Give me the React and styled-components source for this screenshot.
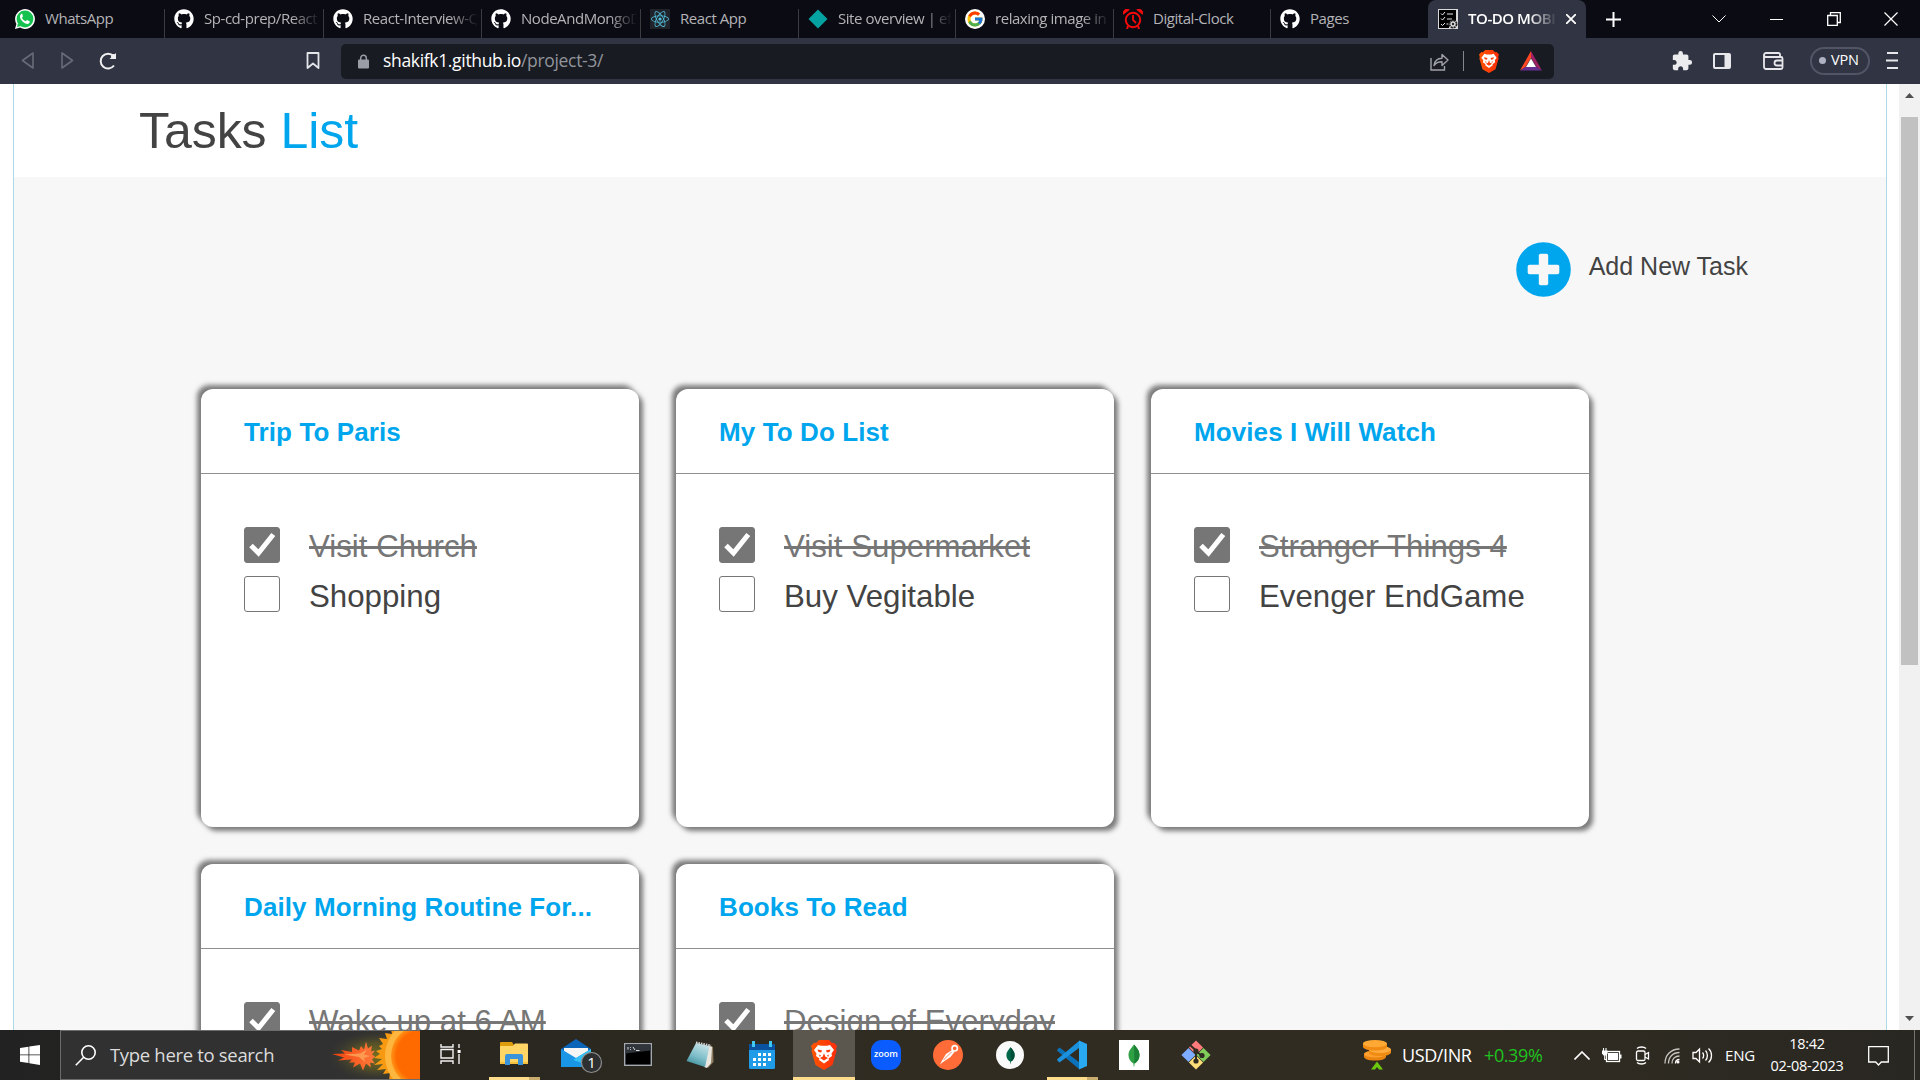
import React from "react";
import styled, { createGlobalStyle, css } from "styled-components";
import { FaGithub, FaReact } from "react-icons/fa";
import { FcGoogle } from "react-icons/fc";
import { MdExtension } from "react-icons/md";

const GlobalStyle = createGlobalStyle`
  *, *::before, *::after { box-sizing: border-box; }
  html, body { margin: 0; padding: 0; overflow: hidden; background: #fff; }
  svg { display: block; flex: none; }
`;

const ui = css`font-family: "Open Sans", "Noto Sans", sans-serif;`;

const Screen = styled.div`
  width: 1920px;
  height: 1080px;
  display: flex;
  flex-direction: column;
  overflow: hidden;
  ${ui}
`;

/* ---------- tab strip ---------- */

const TabStrip = styled.div`
  height: 38px;
  flex: none;
  display: flex;
  background: #0b0b14;
`;

const Tab = styled.div`
  width: ${(p) => p.$width}px;
  flex: none;
  display: flex;
  align-items: center;
  padding-left: ${(p) => p.$pad ?? 9}px;
  color: ${(p) => (p.$active ? "#fff" : "#b4b4b6")};
  background: ${(p) => (p.$active ? "#313442" : "transparent")};
  border-radius: ${(p) => (p.$active ? "8px 8px 0 0" : "0")};
  font-weight: ${(p) => (p.$active ? 600 : 400)};
`;

const TabDivider = styled.div`
  width: 1px;
  height: 29px;
  align-self: flex-end;
  flex: none;
  background: #3b3b40;
`;

const TabTitle = styled.span`
  font-size: 15px;
  line-height: 20px;
  letter-spacing: -0.45px;
  flex: 1;
  min-width: 0;
  margin: 0 ${(p) => p.$end ?? 3}px 2px 10px;
  overflow: hidden;
  white-space: nowrap;
  ${(p) => p.$fade && css`
    mask-image: linear-gradient(to right, #000 calc(100% - 28px), transparent);
  `}
`;

const TabClose = styled.div`
  margin-right: 10px;
`;

const NewTab = styled.div`
  width: 54px;
  display: flex;
  align-items: center;
  justify-content: center;
`;

const WindowControls = styled.div`
  margin-left: auto;
  display: flex;
`;

const WindowButton = styled.div`
  width: 57.3px;
  height: 38px;
  display: flex;
  align-items: center;
  justify-content: center;
`;

/* ---------- address bar ---------- */

const Toolbar = styled.div`
  height: 46px;
  flex: none;
  display: flex;
  align-items: center;
  background: #313442;
  padding: 0 21px;
`;

const ToolGroup = styled.div`
  display: flex;
  align-items: center;
  gap: ${(p) => p.$gap}px;
  margin-left: ${(p) => p.$left ?? 0}px;
  padding-bottom: 1px;
`;

const AddressBar = styled.div`
  width: 1213px;
  height: 35px;
  margin-left: 21px;
  padding: 0 12px 0 17px;
  display: flex;
  align-items: center;
  background: #181b22;
  border-radius: 5px;
`;

const Url = styled.span`
  margin-left: 14px;
  padding-bottom: 2px;
  font-size: 17.5px;
  line-height: 24px;
  letter-spacing: -0.33px;
  color: #fff;
  span { color: #92949b; }
`;

const AddressActions = styled.div`
  margin-left: auto;
  display: flex;
  align-items: center;
`;

const ThinBar = styled.div`
  width: 1px;
  height: 20px;
  margin: 0 15px 0 14px;
  background: #85878c;
`;

const VpnPill = styled.div`
  width: 60px;
  height: 28px;
  border: 2px solid #515566;
  border-radius: 14px;
  display: flex;
  align-items: center;
  padding-left: 7px;
  gap: 5px;
  color: #fff;
  font-size: 14.5px;
  letter-spacing: -0.2px;
  span { padding-bottom: 2px; }
  &::before {
    content: "";
    width: 7px;
    height: 7px;
    border-radius: 50%;
    background: #aeb1c2;
  }
`;

/* ---------- page ---------- */

const Viewport = styled.div`
  height: 946px;
  flex: none;
  display: flex;
  background: #fff;
  overflow: hidden;
  font-family: "Liberation Sans", Arial, sans-serif;
`;

const Page = styled.div`
  width: 1874px;
  margin-left: 13px;
  flex: none;
  border: solid #add8e6;
  border-width: 0 1px;
  display: flex;
  flex-direction: column;
`;

const PageHeader = styled.header`
  height: 93px;
  flex: none;
  padding: 18px 0 0 125px;
  background: #fff;
`;

const PageTitle = styled.h1`
  margin: 0;
  font-size: 50px;
  line-height: 58px;
  font-weight: 400;
  letter-spacing: -0.05px;
  color: #434343;
  span { color: #00a6ed; }
`;

const Board = styled.main`
  flex: 1;
  background: #f7f7f7;
`;

const AddRow = styled.div`
  display: flex;
  justify-content: flex-end;
  align-items: center;
  height: 56px;
  margin-top: 64px;
  padding-right: 138px;
  gap: 18px;
  font-size: 25px;
  color: #434343;
  span { padding-bottom: 5px; }
`;

const Cards = styled.section`
  display: grid;
  grid-template-columns: repeat(3, 438px);
  grid-auto-rows: 438px;
  gap: 37px;
  margin: 92px 0 0 187px;
`;

const Card = styled.article`
  background: #fff;
  border-radius: 12px;
  box-shadow: 4px 4px 5px #7a7a7a, -4px -4px 5px #7a7a7a;
`;

const CardTitle = styled.h2`
  margin: 0;
  height: 85px;
  padding: 28px 0 0 43px;
  font-size: 26px;
  line-height: 30px;
  font-weight: 700;
  letter-spacing: 0.1px;
  color: #00a6ed;
  border-bottom: 1px solid #8f8f8f;
`;

const Items = styled.div`
  padding: 52.9px 0 0 43px;
`;

const Item = styled.div`
  height: 49.5px;
  display: flex;
  align-items: flex-start;
  gap: 29px;
`;

const Box = styled.div`
  width: 36px;
  height: 36px;
  flex: none;
  border: 1px solid #767676;
  border-radius: 3px;
  background: ${(p) => (p.$checked ? "#767676" : "#fff")};
`;

const ItemText = styled.span`
  font-size: 31.25px;
  line-height: 36px;
  padding-top: 2.25px;
  white-space: nowrap;
  color: ${(p) => (p.$done ? "#767676" : "#434343")};
  text-decoration: ${(p) => (p.$done ? "line-through" : "none")};
`;

const Scrollbar = styled.div`
  width: 21px;
  margin-left: auto;
  background: #f1f1f1;
  display: flex;
  flex-direction: column;
  align-items: center;
  justify-content: space-between;
  padding: 9px 0;
`;

const Thumb = styled.div`
  width: 17px;
  height: 548px;
  margin: 19px 0 auto;
  background: #c1c1c1;
`;

/* ---------- taskbar ---------- */

const Taskbar = styled.footer`
  height: 50px;
  flex: none;
  display: flex;
  color: #fff;
  background: linear-gradient(90deg, #222222 0, #28261f 420px, #302c22 900px, #302c22 1500px, #292722 1920px);
`;

const StartButton = styled.div`
  width: 60px;
  display: flex;
  align-items: center;
  justify-content: center;
`;

const SearchBox = styled.div`
  width: 360px;
  border: 1px solid #6b6b6b;
  border-right: 0;
  background: #313131;
  display: flex;
  align-items: center;
  padding-left: 14px;
  font-size: 18.5px;
  letter-spacing: -0.32px;
  color: #dcdcdc;
  span { margin-left: 13px; width: 180px; white-space: nowrap; padding-bottom: 2px; }
  & > svg:last-child { margin-left: auto; }
`;

const AppSlot = styled.div`
  width: ${(p) => p.$width ?? 62}px;
  flex: none;
  display: flex;
  flex-direction: column;
  align-items: center;
  padding-right: ${(p) => p.$inset ?? 0}px;
  background: ${(p) => (p.$current ? "#5b574f" : "transparent")};
`;

const AppIcon = styled.div`
  height: 47px;
  display: flex;
  align-items: center;
  justify-content: center;
  padding-top: ${(p) => p.$drop ?? 3}px;
`;

const Underline = styled.div`
  width: ${(p) => (p.$full ? 62 : 51)}px;
  height: 3px;
  background: ${(p) => (p.$full ? "#fddc8b" : "linear-gradient(90deg, #fddc8b 40px, #c9ad6e 40px)")};
`;

const ZoomTile = styled.div`
  width: 30px;
  height: 30px;
  border-radius: 11px;
  background: #0b5cff;
  color: #fff;
  font-size: 9px;
  font-weight: 600;
  line-height: 27px;
  text-align: center;
`;

const IconPlate = styled.div`
  width: ${(p) => p.$size}px;
  height: ${(p) => p.$size}px;
  flex: none;
  border-radius: ${(p) => (p.$round ? "50%" : "0")};
  background: ${(p) => p.$bg};
  display: flex;
  align-items: center;
  justify-content: center;
`;

const Tray = styled.div`
  margin-left: auto;
  display: flex;
  align-items: center;
`;

const TrayText = styled.span`
  font-size: ${(p) => p.$size}px;
  letter-spacing: ${(p) => p.$track}px;
  margin-left: ${(p) => p.$left}px;
  width: ${(p) => p.$width}px;
  color: ${(p) => p.$color ?? "#fff"};
  white-space: nowrap;
`;

const TrayItem = styled.div`
  margin-left: ${(p) => p.$left}px;
  padding-top: 1px;
`;

const Clock = styled.div`
  width: 78px;
  margin-left: 14px;
  font-size: 14.5px;
  line-height: 22.5px;
  letter-spacing: -0.25px;
  text-align: center;
  white-space: nowrap;
`;

const DesktopEdge = styled.div`
  width: 6px;
  height: 50px;
  margin-left: 25px;
  border-left: 1px solid #77746c;
`;

/* ---------- drawings ---------- */

const WhatsAppIcon = () => (
  <svg width="20" height="20" viewBox="0 0 20 20">
    <path d="M0 20l1.4-5.1A9.9 9.9 0 1 1 5.100 18.600z" fill="#fff" />
    <circle cx="10" cy="10" r="8.400" fill="#16c24f" />
    <path d="M2 18l1-4 3 3z" fill="#16c24f" />
    <path d="M7.400 5.300c-.3-.6-1-.6-1.500-.1-2.300 2.500.2 6 2.600 8 2.300 1.900 5.300 2.400 6.100.4.500-1.100.1-1.300-.6-1.600l-1.500-.8c-.5-.2-.7 0-1 .4-.5.7-.7.8-1.200.5-1.600-.8-2.600-1.800-3.300-3.100-.2-.5.9-1 .9-1.800z" fill="#fff" />
  </svg>
);

const ClockIcon = () => (
  <svg width="20" height="20" viewBox="0 0 20 20" fill="none" stroke="#f30a0a">
    <circle cx="10" cy="11" r="7.200" strokeWidth="2" />
    <path d="M10 6v5l3 3" strokeWidth="1.800" />
    <path d="M5 17l-1 3M15 17l1 3" strokeWidth="2" />
    <path d="M.3 5.800A4.200 4.200 0 0 1 6.800 .8zM19.700 5.800A4.200 4.200 0 0 0 13.200 .8z" fill="#f30a0a" stroke="none" />
  </svg>
);

const ChecklistIcon = () => (
  <svg width="20" height="20" viewBox="0 0 20 20" fill="none" stroke="#e8e8e8">
    <rect width="20" height="20" fill="#d8d8d8" stroke="none" />
    <path d="M1 1h17v11l-4 0-3 3v4H1z" fill="#000" stroke="none" />
    <path d="M3 4.500l1.500 1.500L7 3M3 9.500L4.500 11 7 8M3 15l1.500 1.500L7 14M9 5h6M9 10h5M8.500 15h2" strokeWidth="1" />
    <circle cx="15" cy="15" r="3.600" stroke="#222" strokeWidth="1.800" strokeDasharray="2.200 .6" fill="#ddd" />
    <circle cx="15" cy="15" r="1.200" fill="#222" stroke="none" />
  </svg>
);

const Lock = () => (
  <svg width="11" height="15" viewBox="0 0 11 15">
    <path d="M2.700 6V4a2.800 2.800 0 0 1 5.600 0v2" fill="none" stroke="#9a9da6" strokeWidth="1.500" />
    <rect y="5.500" width="11" height="9" rx="1" fill="#9a9da6" />
  </svg>
);

const Share = () => (
  <svg width="19" height="19" viewBox="0 0 19 19" fill="none" stroke="#a0a2a8" strokeWidth="1.400">
    <path d="M1 6v12h13.500v-4" />
    <path d="M4 13.500c.6-5 3.500-7 8-7.200V2.500L18 8l-6 5.500V9.800c-3.500 0-6 .8-8 3.700z" strokeLinejoin="round" />
  </svg>
);

const Bat = () => (
  <svg width="22" height="20" viewBox="0 0 22 20">
    <path d="M11 0L0 19.500 5.500 16 11 7z" fill="#ff4724" />
    <path d="M11 0l11 19.500L16.500 16 11 7z" fill="#9e1f63" />
    <path d="M0 19.500h22L16.500 16h-11z" fill="#662d91" />
    <path d="M11 7.500L16 16H6z" fill="#fff" />
  </svg>
);

const BraveLion = ({ w, h }) => (
  <svg width={w} height={h} viewBox="0 0 26 30">
    <defs>
      <linearGradient id="lion" x1="0" x2="1">
        <stop offset="0" stopColor="#ff5500" />
        <stop offset="1" stopColor="#ff2d0c" />
      </linearGradient>
    </defs>
    <path d="M8 0h10l3 3 2-.3L26 6l-1 3 .5 2-4 14L13 30 4.500 25l-4-14L1 9 0 6l3-3.300L5 3z" fill="url(#lion)" />
    <path d="M7 5l3 .8h6L19 5l4 5-2.500 3.500L21 16l-3.500 2.500L18 20l-5 3.500L8 20l.5-1.500L5 16l.5-2.500L3 10z" fill="#fff" />
    <path d="M6.500 9.500l4.500.8-.8 2.300-2.700-.6zM19.500 9.500l-4.500.8.8 2.300 2.700-.6zM13 13l1.200 3.500L17 18l-4 2.500L9 18l2.800-1.500zM8 14.500l2 1-1.200 1.600zM18 14.500l-2 1 1.200 1.600z" fill="#ff3c0a" />
  </svg>
);

const Tick = () => (
  <svg width="34" height="34" viewBox="0 0 34 34">
    <path d="M6 17.500l7.500 7.500L28.300 6.500" fill="none" stroke="#fff" strokeWidth="5" />
  </svg>
);

const Plus = () => (
  <svg width="55" height="55" viewBox="0 0 55 55">
    <circle cx="27.500" cy="27.500" r="27.300" fill="#00a6ed" />
    <rect x="11.700" y="22.800" width="31.600" height="9.400" rx="1.800" fill="#f7f7f7" />
    <rect x="22.800" y="11.700" width="9.400" height="31.600" rx="1.800" fill="#f7f7f7" />
  </svg>
);

const Meteor = () => (
  <svg width="94" height="48" viewBox="0 0 94 48">
    <defs>
      <radialGradient id="halo">
        <stop offset="0" stopColor="#857a1c" stopOpacity=".85" />
        <stop offset=".5" stopColor="#6b6422" stopOpacity=".6" />
        <stop offset="1" stopColor="#323232" stopOpacity="0" />
      </radialGradient>
      <radialGradient id="sun">
        <stop offset=".82" stopColor="#ff6a00" />
        <stop offset="1" stopColor="#ff9416" />
      </radialGradient>
      <linearGradient id="flame">
        <stop offset="0" stopColor="#f2410e" />
        <stop offset="1" stopColor="#ff7a3a" />
      </linearGradient>
    </defs>
    <ellipse cx="52" cy="25" rx="52" ry="27" fill="url(#halo)" />
    <path d="M6 23l13-.5-4-3.500 11 2 0-5 7 3.500 2-4.500 3 3.500 2-8 2 7 4-3-1 6 4-1-3 4 3 2-3 3 3 4-5-1 1 5-5-4-3 7-3-7-7 4 2-5-6 0 3-3-14 1 6-3z" fill="url(#flame)" />
    <path d="M18 23.500l16-1 7-4-3 5 6 1.500-6 2 1 4-6-5z" fill="#ffa65a" opacity=".8" />
    <path d="M94 0H70l-5-1 1 4-7-1 2 6-8-1 4 6-4 2 3 3-6 2 4 3-6 4 8 1-8 6 9-1-6 6 9-1-3 5 7-1-1 7h31z" fill="#f79a12" />
    <circle cx="96" cy="25" r="37" fill="#ffb63e" />
    <circle cx="96" cy="25" r="31" fill="url(#sun)" />
  </svg>
);

const TaskView = () => (
  <svg width="21" height="20" viewBox="0 0 21 20" fill="none" stroke="#f4f4f4" strokeWidth="1.400">
    <path d="M1 0v3h12V0M1 20v-3h12v3M1 5.500h12v8.500H1zM19 0v4M19 10v10" />
    <rect x="17.600" y="6" width="3" height="3" fill="#fff" stroke="none" />
  </svg>
);

const Folder = () => (
  <svg width="28" height="24" viewBox="0 0 28 24">
    <path d="M0 1a1 1 0 0 1 1-1h11l2 3v3H0z" fill="#dc9c0c" />
    <path d="M0 4h13l2-2.500h12a1 1 0 0 1 1 1V22H0z" fill="#ffd666" />
    <path d="M0 20h28v2H0z" fill="#f5c03c" />
    <path d="M5 23v-9a2 2 0 0 1 2-2h14a2 2 0 0 1 2 2v9h-5v-6h-8v6z" fill="#3a94dc" />
  </svg>
);

const Mail = () => (
  <svg width="54" height="36" viewBox="-12 0 54 36">
    <path d="M0 11L15 1l15 10v3H0z" fill="#0a64b8" />
    <path d="M3 10h24v7l-12 6L3 17z" fill="#f5f5f5" />
    <path d="M0 11l15 9 15-9v18H0z" fill="#1a96e6" />
    <path d="M30 11L12 22l18 6z" fill="#35c1f5" />
    <circle cx="30.500" cy="24.500" r="10" fill="#2e2f30" stroke="#8d8d8d" strokeWidth="1.200" />
    <text x="30.500" y="30" fill="#fff" fontSize="15" textAnchor="middle" fontFamily="Open Sans, sans-serif">1</text>
  </svg>
);

const Terminal = () => (
  <svg width="28" height="23" viewBox="0 0 28 23">
    <rect x=".7" y=".7" width="26.600" height="21.600" fill="#000" stroke="#a3a7b0" strokeWidth="1.400" />
    <path d="M1.500 1.500h25v6l-25 3z" fill="#30343b" />
    <path d="M4 4v2.500M6.500 4v.8M6.500 6v.8M9 4l2 3M12 7.500h3.500" stroke="#ddd" strokeWidth="1" />
  </svg>
);

const Notepad = () => (
  <svg width="28" height="28" viewBox="0 0 28 28">
    <defs>
      <linearGradient id="pad" x1=".7" x2=".3" y1="0" y2="1">
        <stop offset="0" stopColor="#c9e4e8" />
        <stop offset=".55" stopColor="#7fbfca" />
        <stop offset="1" stopColor="#3a8b98" />
      </linearGradient>
    </defs>
    <path d="M24 4l3 2 .5 15-5.500 6z" fill="#8d7d62" />
    <path d="M23 5l3 1-1 16-4 5-3-1z" fill="#e9e6df" />
    <path d="M10 2l13.500 3L19 26 .5 20z" fill="url(#pad)" />
    <path d="M10 1.500l15 3" stroke="#d8d8d8" strokeWidth="2" strokeDasharray="1.500 1" />
  </svg>
);

const Calendar = () => (
  <svg width="26" height="28" viewBox="0 0 26 28">
    <rect y="3" width="26" height="25" rx="1.500" fill="#1f9be8" />
    <path d="M0 4.500A1.500 1.500 0 0 1 1.500 3h23A1.500 1.500 0 0 1 26 4.500V9H0z" fill="#0a52a0" />
    <path d="M3 0h3v6H3zM20 0h3v6h-3z" fill="#40c8f2" />
    <path d="M9 12h3v3H9zM14 12h3v3h-3zM19 12h3v3h-3zM4 17h3v3H4zM9 17h3v3H9zM14 17h3v3h-3zM19 17h3v3h-3zM4 22h3v3H4zM9 22h3v3H9zM14 22h3v3h-3z" fill="#fff" />
  </svg>
);

const Postman = () => (
  <svg width="30" height="30" viewBox="0 0 30 30">
    <circle cx="15" cy="15" r="15" fill="#ff6c37" />
    <circle cx="21.700" cy="8.300" r="2.700" fill="none" stroke="#fff" strokeWidth="1.600" />
    <path d="M19 10l2.500 2-4 5-7.500 5-3 2.500 2-4 4-6.500z" fill="#fff" />
    <path d="M18.500 12l-8 8" stroke="#ff6c37" strokeWidth=".8" />
  </svg>
);

const VsCode = () => (
  <svg width="30" height="30" viewBox="0 0 30 30">
    <path d="M2.500 7.500L22 22v7L.5 11c-.6-.5-.6-1 0-1.500z" fill="#0b72b9" />
    <path d="M2.500 22.500L22 8V1L.5 19c-.6.5-.6 1 0 1.500z" fill="#1b90dc" />
    <path d="M22 .5L30 4v22l-8 3.500z" fill="#2aa9f3" />
  </svg>
);

const Leaf = ({ w, h, dark }) => (
  <svg width={w} height={h} viewBox="0 0 12 22">
    <path d="M6 0c3 3.500 5.500 6 5.500 10.500C11.500 15 9 17.500 6.500 19L6.300 22h-.6l-.3-3C2.500 17 .5 14.500.5 10.500.5 6 3.500 3.500 6 0z" fill={dark ? "#00684a" : "#2fa044"} />
    <path d="M6 0c3 3.500 5.500 6 5.500 10.500C11.500 15 9 17.500 6.500 19z" fill={dark ? "#004d38" : "#1c7f36"} />
  </svg>
);

const GitTile = () => (
  <svg width="30" height="30" viewBox="0 0 30 30">
    <g transform="rotate(45 15 15)">
      <rect x="4.700" y="4.700" width="10" height="10" fill="#ff7b7b" />
      <rect x="15.300" y="4.700" width="10" height="10" fill="#80cc5a" />
      <rect x="4.700" y="15.300" width="10" height="10" fill="#7eacff" />
      <rect x="15.300" y="15.300" width="10" height="10" fill="#ffdf78" />
    </g>
    <path d="M9.500 5.500l5.500 5v11M15 11l6 5" fill="none" stroke="#2f2b22" strokeWidth="2" />
    <circle cx="15" cy="11" r="2.600" fill="#2f2b22" />
    <circle cx="15" cy="21" r="2.600" fill="#2f2b22" />
    <circle cx="21" cy="15.500" r="2.600" fill="#2f2b22" />
  </svg>
);

const Coins = () => (
  <svg width="28" height="30" viewBox="0 0 28 30">
    <path d="M1 13.500h22v3c0 2.500-4 4-11 4s-11-1.500-11-4z" fill="#e8830f" />
    <ellipse cx="12" cy="14" rx="11" ry="3.600" fill="#ff9f2e" />
    <path d="M6 9h22v3c0 2.500-4 4-11 4S6 14.500 6 12z" fill="#f08b14" />
    <ellipse cx="17" cy="9.500" rx="11" ry="3.600" fill="#ffab3d" />
    <path d="M0 3.500h24v3c0 2.500-5 4-12 4S0 9 0 6.500z" fill="#f08b14" />
    <ellipse cx="12" cy="3.600" rx="12" ry="3.600" fill="#ffa834" />
    <path d="M8 29.500l6-8 6 8h-4L14 27l-2 2.500z" fill="#6cc90f" />
  </svg>
);

const line = { fill: "none", stroke: "#fff", strokeWidth: 1.3 };

/* ---------- data ---------- */

const tabs = [
  { icon: <WhatsAppIcon />, title: "WhatsApp", width: 165, pad: 15 },
  { icon: <FaGithub size={20} color="#fff" />, title: "Sp-cd-prep/React", fade: true, width: 159 },
  { icon: <FaGithub size={20} color="#fff" />, title: "React-Interview-Q", fade: true, width: 158 },
  { icon: <FaGithub size={20} color="#fff" />, title: "NodeAndMongoD", fade: true, width: 159 },
  { icon: <IconPlate $size={20} $bg="#20232a"><FaReact size={18} color="#53c1de" /></IconPlate>, title: "React App", width: 158 },
  {
    icon: <svg width="20" height="20" viewBox="0 0 20 20"><path d="M10 .5L19.500 10 10 19.500.5 10z" fill="#05a2a2" /></svg>,
    title: "Site overview | eff", fade: true, width: 157,
  },
  { icon: <IconPlate $size={20} $round $bg="#fff"><FcGoogle size={18} /></IconPlate>, title: "relaxing image in", fade: true, width: 158 },
  { icon: <ClockIcon />, title: "Digital-Clock", width: 157 },
  { icon: <FaGithub size={20} color="#fff" />, title: "Pages", width: 157, last: true },
];

const lists = [
  { title: "Trip To Paris", items: [["Visit Church", true], ["Shopping", false]] },
  { title: "My To Do List", items: [["Visit Supermarket", true], ["Buy Vegitable", false]] },
  { title: "Movies I Will Watch", items: [["Stranger Things 4", true], ["Evenger EndGame", false]] },
  { title: "Daily Morning Routine For...", items: [["Wake up at 6 AM", true]] },
  { title: "Books To Read", items: [["Design of Everyday", true]] },
];

const apps = [
  { icon: <Folder />, open: true, drop: 0 },
  { icon: <Mail />, drop: 5 },
  { icon: <Terminal />, drop: 2 },
  { icon: <Notepad /> },
  { icon: <Calendar /> },
  { icon: <BraveLion w={26} h={30} />, current: true },
  { icon: <ZoomTile>zoom</ZoomTile> },
  { icon: <Postman /> },
  { icon: <IconPlate $size={28} $round $bg="#fafafa"><Leaf w={9} h={19} dark /></IconPlate> },
  { icon: <VsCode />, open: true },
  { icon: <IconPlate $size={30} $bg="#fff"><Leaf w={12} h={23} /></IconPlate> },
  { icon: <GitTile /> },
];

export default function App() {
  return (
    <Screen>
      <GlobalStyle />
      <TabStrip>
        {tabs.map((t, i) => (
          <Tab key={i} $width={t.width} $pad={t.pad}>
            {t.icon}
            <TabTitle $fade={t.fade}>{t.title}</TabTitle>
            {!t.last && <TabDivider />}
          </Tab>
        ))}
        <Tab $active $width={158} $pad={10}>
          <ChecklistIcon />
          <TabTitle $fade $end={9}>TO-DO MOBI</TabTitle>
          <TabClose>
            <svg width="10" height="10" viewBox="0 0 10 10" {...line} strokeWidth="1.8"><path d="M0 0l10 10M10 0L0 10" /></svg>
          </TabClose>
        </Tab>
        <NewTab>
          <svg width="15" height="15" viewBox="0 0 15 15" {...line} strokeWidth="2"><path d="M7.500 0v15M0 7.500h15" /></svg>
        </NewTab>
        <WindowControls>
          <WindowButton>
            <svg width="14" height="8" viewBox="0 0 14 8" {...line} strokeWidth="1"><path d="M.5.5L7 7 13.500.5" /></svg>
          </WindowButton>
          <WindowButton>
            <svg width="13" height="1" viewBox="0 0 13 1"><path d="M0 0h13v1H0z" fill="#fff" /></svg>
          </WindowButton>
          <WindowButton>
            <svg width="14" height="14" viewBox="0 0 14 14" {...line}><path d="M.7 3.500h9.600v9.800H.7zM3.500 3V.7h9.800v9.800h-2.500" /></svg>
          </WindowButton>
          <WindowButton>
            <svg width="14" height="14" viewBox="0 0 14 14" {...line} strokeWidth="1.200"><path d="M.5.5l13 13M13.500.5l-13 13" /></svg>
          </WindowButton>
        </WindowControls>
      </TabStrip>

      <Toolbar>
        <ToolGroup $gap={27}>
          <svg width="13" height="17" viewBox="0 0 13 17" fill="none" stroke="#686b77" strokeWidth="1.600" strokeLinejoin="round"><path d="M12 1v15L1.500 8.500z" /></svg>
          <svg width="13" height="17" viewBox="0 0 13 17" fill="none" stroke="#686b77" strokeWidth="1.600" strokeLinejoin="round"><path d="M1 1v15l10.500-7.500z" /></svg>
        </ToolGroup>
        <ToolGroup $left={25}>
          <svg width="18" height="18" viewBox="0 0 18 18" fill="none" stroke="#f0f0f2" strokeWidth="2"><path d="M15 13.500A7.400 7.400 0 1 1 14.500 4" /><path d="M17 1v6h-6.500z" fill="#f0f0f2" stroke="none" /><circle cx="14.500" cy="4.500" r="2.500" fill="#f0f0f2" stroke="none" /></svg>
        </ToolGroup>
        <ToolGroup $left={189}>
          <svg width="14" height="17" viewBox="0 0 14 17" fill="none" stroke="#e4e5ea" strokeWidth="1.800" strokeLinejoin="round"><path d="M1.500 1h11v15L7 11.500 1.500 16z" /></svg>
        </ToolGroup>
        <AddressBar>
          <Lock />
          <Url>shakifk1.github.io<span>/project-3/</span></Url>
          <AddressActions>
            <Share />
            <ThinBar />
            <BraveLion w={20} h={23} />
            <ToolGroup $left={21}><Bat /></ToolGroup>
          </AddressActions>
        </AddressBar>
        <ToolGroup $left={117}><MdExtension size={22} color="#ececef" /></ToolGroup>
        <ToolGroup $left={20}>
          <svg width="18" height="16" viewBox="0 0 18 16"><rect x="1" y="1" width="16" height="14" rx="1" fill="none" stroke="#e8e8ec" strokeWidth="2" /><path d="M11.500 1H17v14h-5.500z" fill="#e8e8ec" /></svg>
        </ToolGroup>
        <ToolGroup $left={32}>
          <svg width="21" height="18" viewBox="0 0 21 18" fill="none" stroke="#e8e8ec" strokeWidth="1.800"><path d="M17 4V2.500A1.500 1.500 0 0 0 15.500 1H3a2 2 0 0 0 0 4h15a1.500 1.500 0 0 1 1.500 1.500v9A1.500 1.500 0 0 1 18 17H3a2 2 0 0 1-2-2V3M20 8.500h-6a2.500 2.500 0 0 0 0 5h6" /></svg>
        </ToolGroup>
        <ToolGroup $left={26} $gap={16}>
          <VpnPill><span>VPN</span></VpnPill>
          <svg width="12" height="17" viewBox="0 0 12 17"><path d="M1 0h11v2H1zM0 7.500h12v2H0zM1 15h11v2H1z" fill="#e8e8ec" /></svg>
        </ToolGroup>
      </Toolbar>

      <Viewport>
        <Page>
          <PageHeader>
            <PageTitle>Tasks <span>List</span></PageTitle>
          </PageHeader>
          <Board>
            <AddRow>
              <Plus />
              <span>Add New Task</span>
            </AddRow>
            <Cards>
              {lists.map((l) => (
                <Card key={l.title}>
                  <CardTitle>{l.title}</CardTitle>
                  <Items>
                    {l.items.map(([text, done]) => (
                      <Item key={text}>
                        <Box $checked={done}>{done && <Tick />}</Box>
                        <ItemText $done={done}>{text}</ItemText>
                      </Item>
                    ))}
                  </Items>
                </Card>
              ))}
            </Cards>
          </Board>
        </Page>
        <Scrollbar>
          <svg width="9" height="5" viewBox="0 0 9 5"><path d="M0 5h9L4.500 0z" fill="#505050" /></svg>
          <Thumb />
          <svg width="9" height="5" viewBox="0 0 9 5"><path d="M0 0h9L4.500 5z" fill="#505050" /></svg>
        </Scrollbar>
      </Viewport>

      <Taskbar>
        <StartButton>
          <svg width="20" height="20" viewBox="0 0 20 20"><path d="M0 3l8.500-1.300v7.800H0zM9.300 1.500L20 0v9.500H9.300zM0 10.300h8.500V18L0 16.800zM9.300 10.300H20V20L9.300 18.200z" fill="#fff" /></svg>
        </StartButton>
        <SearchBox>
          <svg width="22" height="21" viewBox="0 0 22 21" {...line} strokeWidth="1.600"><circle cx="13.500" cy="7.500" r="6.700" /><path d="M8.700 12.300L.8 20.200" /></svg>
          <span>Type here to search</span>
          <Meteor />
        </SearchBox>
        <AppSlot $width={63} $inset={3}><AppIcon $drop={0}><TaskView /></AppIcon></AppSlot>
        {apps.map((a, i) => (
          <AppSlot key={i} $current={a.current}>
            <AppIcon $drop={a.drop}>{a.icon}</AppIcon>
            {(a.open || a.current) && <Underline $full={a.current} />}
          </AppSlot>
        ))}
        <Tray>
          <Coins />
          <TrayText $size={18} $track={-0.4} $left={11} $width={73}>USD/INR</TrayText>
          <TrayText $size={18} $track={-0.4} $left={9} $width={60} $color="#1fc31f">+0.39%</TrayText>
          <TrayItem $left={30}>
            <svg width="16" height="9" viewBox="0 0 16 9" {...line} strokeWidth="1.600"><path d="M.5 8.500L8 1l7.500 7.500" /></svg>
          </TrayItem>
          <TrayItem $left={12}>
            <svg width="20" height="15" viewBox="0 0 20 15" {...line}><rect x="4.500" y="3.500" width="13" height="10" /><path d="M6 5h10v7H6zM17.500 6.500h2v4h-2z" fill="#fff" stroke="none" /><path d="M0 2.500h5.500v3L4 7.500H1.500L0 5.500z" fill="#fff" stroke="none" /><path d="M1.500 0v3M4 0v3M2.700 7v4.500h2" strokeWidth="1.100" /></svg>
          </TrayItem>
          <TrayItem $left={13}>
            <svg width="15" height="19" viewBox="0 0 15 19" {...line}><rect x="1.500" y="5" width="8.500" height="9.500" rx="1.500" /><path d="M10 8.500l3.500-2v6.500L10 11M2 2.500C4 .5 9 .5 11 2.500M2 16.500c2 2 7 2 9 0" /></svg>
          </TrayItem>
          <TrayItem $left={14}>
            <svg width="17" height="16" viewBox="0 0 17 16" fill="none" stroke="#c8c6c0" strokeWidth="1.300"><path d="M1 15.500C1 7 7 1 15.500 1M4.500 15.500c0-6.500 4.500-11 11-11M8 15.500C8 11 11 8 15.500 8" /><path d="M11.500 15.500c0-2.500 1.500-4 4-4" stroke="#fff" /><circle cx="14" cy="14" r="1.500" fill="#fff" stroke="none" /></svg>
          </TrayItem>
          <TrayItem $left={11}>
            <svg width="21" height="17" viewBox="0 0 21 17" {...line}><path d="M1 5.500h3L7.500 2v13L4 11.500H1zM10.500 5.500c1.500 1.500 1.500 4.500 0 6M13.500 3.500c2.500 2.500 2.500 7.500 0 10M16.500 1.500c4 3.500 4 10.500 0 14" /></svg>
          </TrayItem>
          <TrayText $size={15} $track={-0.2} $left={12} $width={29}>ENG</TrayText>
          <Clock>
            <div>18:42</div>
            <div>02-08-2023</div>
          </Clock>
          <TrayItem $left={22}>
            <svg width="21" height="20" viewBox="0 0 21 20" {...line}><path d="M.7.7h19.600v15.300h-7L10.500 19 7.700 16H.7z" /></svg>
          </TrayItem>
          <DesktopEdge />
        </Tray>
      </Taskbar>
    </Screen>
  );
}
